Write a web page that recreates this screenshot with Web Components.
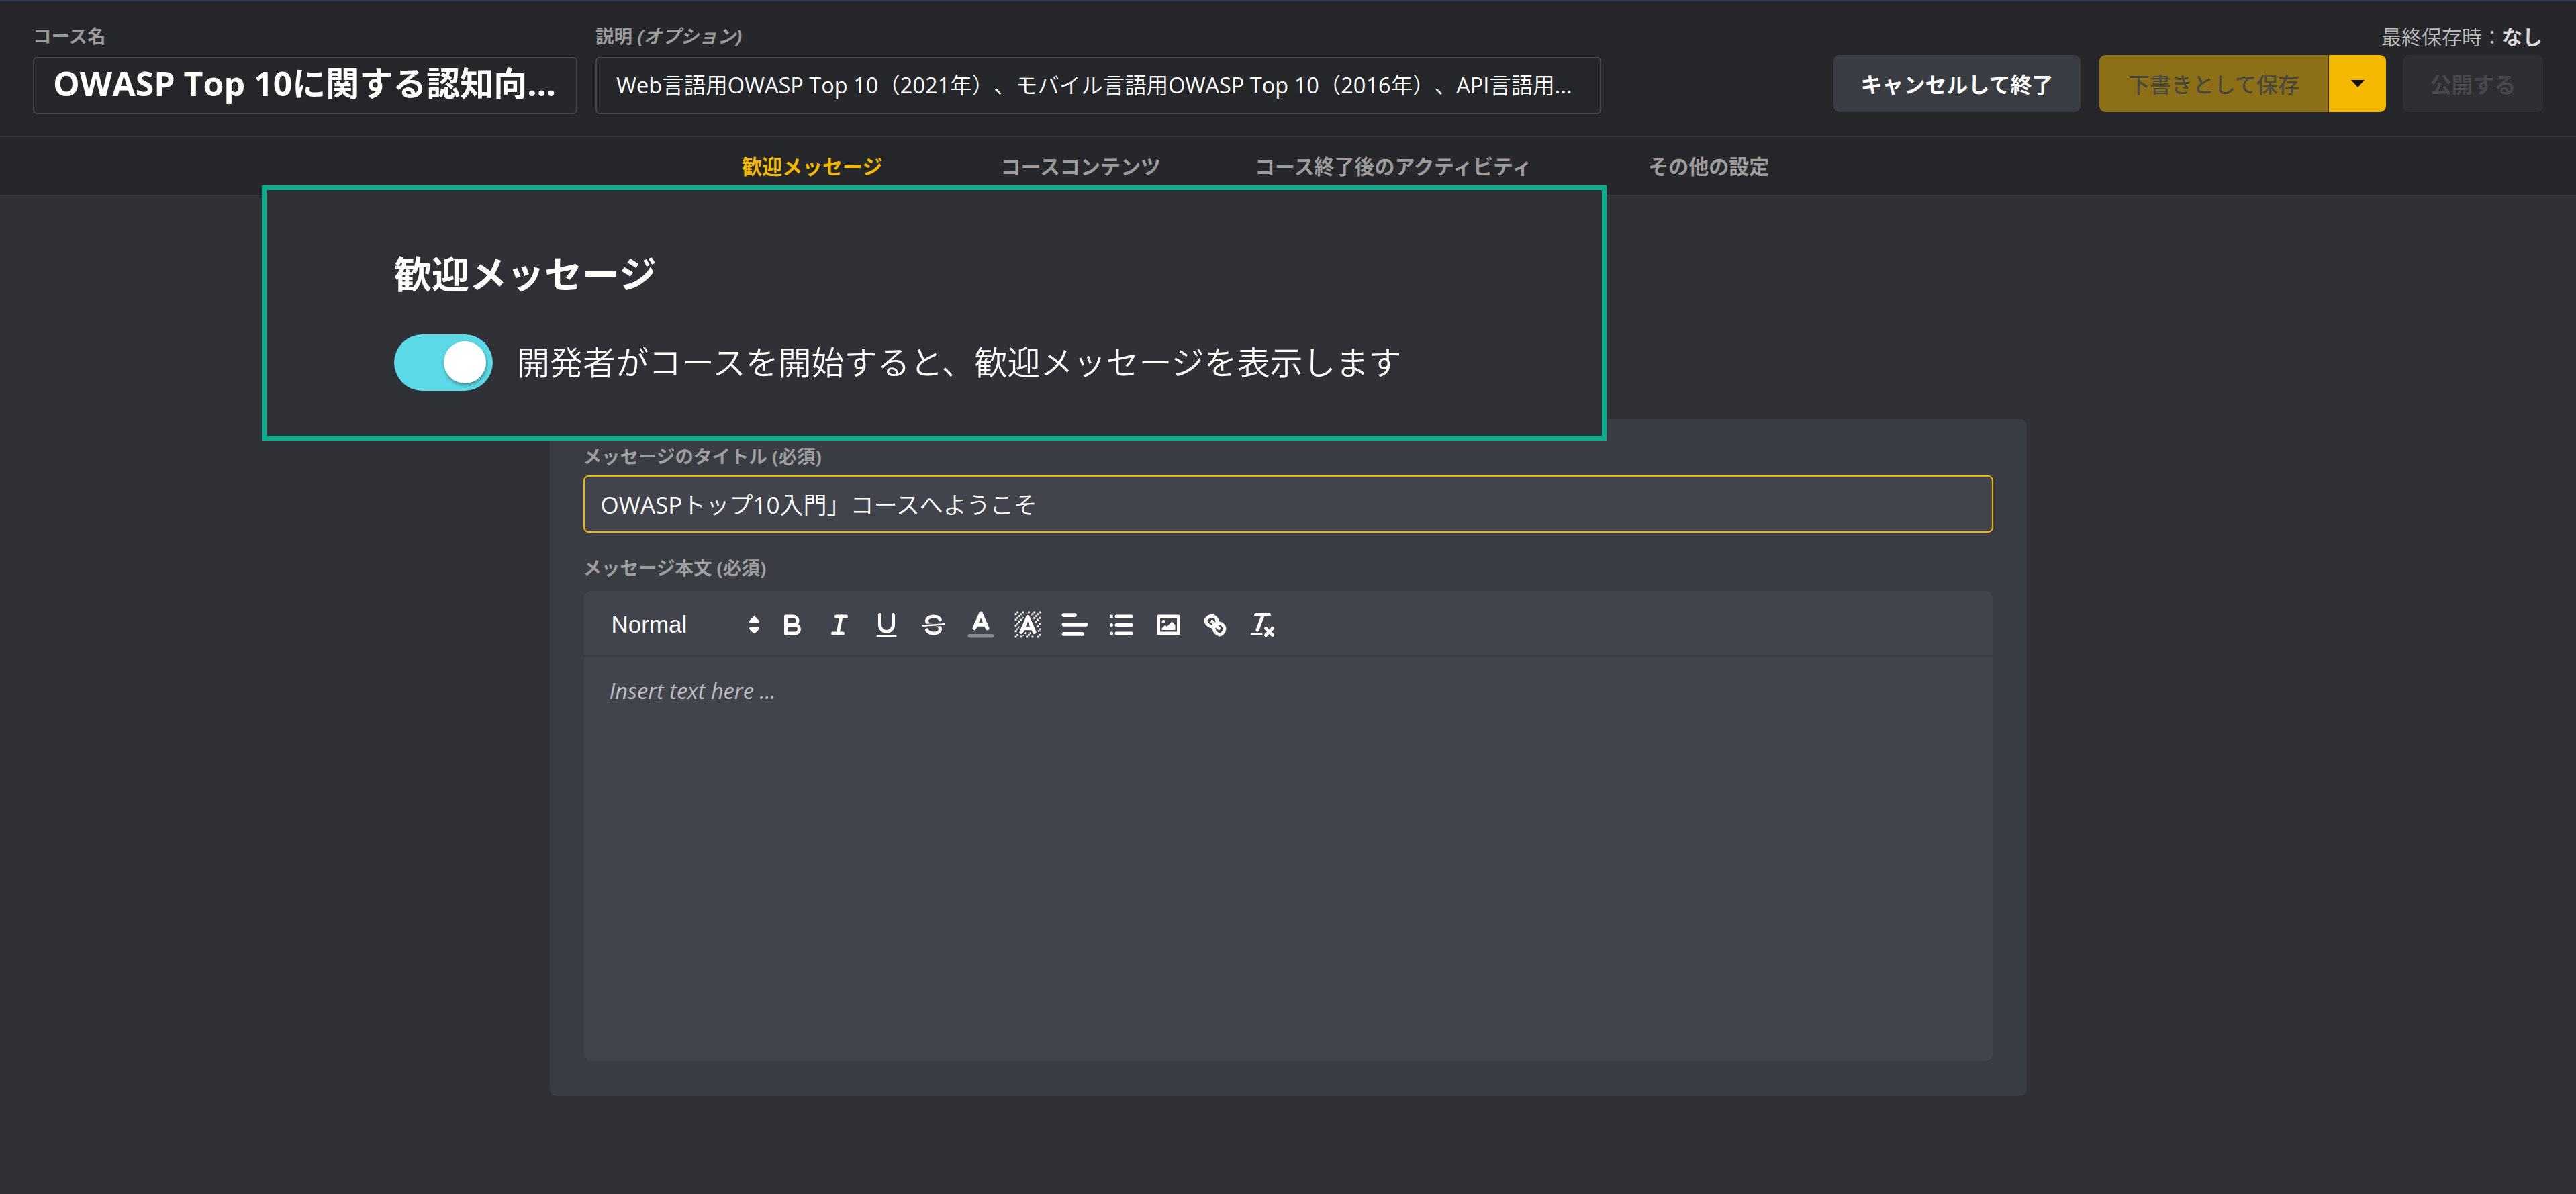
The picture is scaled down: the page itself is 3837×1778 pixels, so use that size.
<!DOCTYPE html>
<html lang="ja">
<head>
<meta charset="utf-8">
<title>Course editor</title>
<style>
html,body{margin:0;padding:0;background:#303136;}
body{font-family:"Open Sans","Noto Sans CJK JP",sans-serif;color:#fff;height:1778px;overflow:hidden;text-spacing-trim:space-all;}
</style>
</head>
<body>
<course-app></course-app>
<script>
const FONT='"Open Sans","Noto Sans CJK JP",sans-serif';
function def(name,css,html,init){
  customElements.define(name,class extends HTMLElement{
    constructor(){super();const r=this.attachShadow({mode:'open'});
      r.innerHTML='<style>'+css+'</style>'+(typeof html==='function'?html(this):html);}
    connectedCallback(){ if(init) init(this); }
  });
}
def('course-field',`
:host{display:block;font-family:${FONT};}
.l{display:block;height:40px;line-height:40px;font-size:27.5px;font-weight:700;color:#9b9b9b;margin-bottom:11px;}
.b{box-sizing:border-box;height:85px;border:2px solid #43464d;border-radius:6px;background:#26272b;display:flex;align-items:center;color:#fff;white-space:pre;overflow:hidden;}
:host([big]) .b{font-size:50px;font-weight:700;padding:0 0 12px 28px;}
:host(:not([big])) .b{font-size:32.5px;padding:0 0 5px 29px;}
`,`<span class="l"><slot name="label"></slot></span><div class="b"><slot></slot></div>`);

def('action-btn',`
:host{display:inline-flex;box-sizing:border-box;height:85px;align-items:center;justify-content:center;border-radius:9px;font-family:${FONT};font-size:32px;font-weight:700;white-space:nowrap;padding-bottom:2px;}
:host([kind=cancel]){width:368px;background:#3a3c44;color:#fff;}
:host([kind=publish]){width:209px;background:#2e2f34;color:#47484d;}
`,`<slot></slot>`);

def('split-btn',`
:host{display:inline-flex;height:85px;font-family:${FONT};font-size:32px;font-weight:500;}
.m{width:341px;background:#8c6f17;color:#4a4a3c;border-radius:9px 0 0 9px;display:flex;align-items:center;justify-content:center;box-sizing:border-box;padding:0 0 2px 0;white-space:nowrap;}
.a{width:86px;box-sizing:border-box;border-left:1px solid #2e2a18;background:#f5b800;border-radius:0 9px 9px 0;display:flex;align-items:center;justify-content:center;}
svg{width:20px;height:11px;display:block;}
`,`<div class="m"><slot></slot></div><div class="a"><svg viewBox="0 0 20 11"><polygon points="0,0 20,0 10,11" fill="#111"/></svg></div>`);

def('course-header',`
:host{display:flex;box-sizing:border-box;height:204px;border-top:2px solid #34375a;border-bottom:2px solid #36373d;background:#26272b;padding:32px 49px 0 49px;}
.f{display:flex;gap:27px;}
.j{font-weight:350}
.r{margin-left:auto;display:flex;flex-direction:column;align-items:flex-end;}
.s{height:40px;line-height:40px;font-size:30px;color:#bdbdbd;margin:1px 1px 7px 0;white-space:nowrap;}
.s b{color:#ddd;font-weight:700;}
.g{display:flex;}
.g .sp{margin-left:28px}.g .pb{margin-left:25px}
`,`<div class="f">
<course-field big style="width:811px"><span slot="label">コース名</span>OWASP Top 10に関する認知向...</course-field>
<course-field style="width:1498px"><span slot="label">説明 <i>(オプション)</i></span><span>Web<span class="j">言語用</span>OWASP Top 10<span class="j">（</span>2021<span class="j">年）、モバイル言語用</span>OWASP Top 10<span class="j">（</span>2016<span class="j">年）、</span>API<span class="j">言語用</span>...</span></course-field>
</div>
<div class="r"><div class="s"><span class="j">最終保存時：</span><b>なし</b></div>
<div class="g"><action-btn kind="cancel">キャンセルして終了</action-btn><split-btn class="sp">下書きとして保存</split-btn><action-btn kind="publish" class="pb">公開する</action-btn></div></div>`);

def('tab-nav',`
:host{display:flex;box-sizing:border-box;height:88px;background:#26272b;border-bottom:2px solid #36373d;padding:0 0 2px 1105px;align-items:center;font-size:30px;font-weight:700;color:#9c9c9c;white-space:nowrap;font-family:${FONT};}
span{display:block}
.a{color:#f5b800}
.t2{margin-left:176px}.t3{margin-left:140px}.t4{margin-left:173px}
`,`<span class="a">歓迎メッセージ</span><span class="t2">コースコンテンツ</span><span class="t3">コース終了後のアクティビティ</span><span class="t4">その他の設定</span>`);

def('toggle-switch',`
:host{display:block;position:relative;width:147px;height:84px;border-radius:42px;background:#5cd9e6;flex:none;}
i{position:absolute;top:10px;right:10px;width:63px;height:63px;border-radius:50%;background:#fff;box-shadow:1px 3px 5px rgba(0,0,0,.35);}
`,`<i></i>`);

def('welcome-callout',`
:host{display:block;position:absolute;left:390px;top:276px;box-sizing:border-box;width:2003px;height:380px;border:7px solid #0bad8f;background:#303136;padding:94px 0 0 190px;font-family:${FONT};color:#fff;}
h2{margin:0 0 61px 0;height:60px;line-height:60px;font-size:56px;font-weight:700;}
.r{display:flex;align-items:center;gap:36px;font-size:49px;line-height:84px;white-space:nowrap;color:#fff;font-weight:350;}
.r span{position:relative;top:-1px}
`,`<h2>歓迎メッセージ</h2><div class="r"><toggle-switch></toggle-switch><span>開発者がコースを開始すると、歓迎メッセージを表示します</span></div>`);

const ICONS={
bold:`<path class="s" d="M5,4H9.5A2.5,2.5,0,0,1,12,6.5v0A2.5,2.5,0,0,1,9.5,9H5A0,0,0,0,1,5,9V4A0,0,0,0,1,5,4Z"/><path class="s" d="M5,9h5.5A2.5,2.5,0,0,1,13,11.5v0A2.5,2.5,0,0,1,10.5,14H5a0,0,0,0,1,0,0V9A0,0,0,0,1,5,9Z"/>`,
italic:`<line class="s" x1="7" x2="13" y1="4" y2="4"/><line class="s" x1="5" x2="11" y1="14" y2="14"/><line class="s" x1="8" x2="10" y1="14" y2="4"/>`,
underline:`<path class="s" d="M5,3V9a4.012,4.012,0,0,0,4,4H9a4.012,4.012,0,0,0,4-4V3"/><rect class="f" height="1" rx="0.5" ry="0.5" width="12" x="3" y="15"/>`,
strike:`<line class="s" style="stroke-width:1" x1="15.5" x2="2.5" y1="8.5" y2="9.5"/><path class="f" d="M9.007,8C6.542,7.791,6,7.519,6,6.5,6,5.792,7.283,5,9,5c1.571,0,2.765.679,2.969,1.309a1,1,0,0,0,1.9-.617C13.356,4.106,11.354,3,9,3,6.2,3,4,4.538,4,6.5a3.2,3.2,0,0,0,.5,1.843Z"/><path class="f" d="M8.984,10C11.457,10.208,12,10.479,12,11.5c0,.708-1.283,1.5-3,1.5-1.571,0-2.765-.679-2.969-1.309a1,1,0,1,0-1.9.617C4.644,13.894,6.646,15,9,15c2.8,0,5-1.538,5-3.5a3.2,3.2,0,0,0-.5-1.843Z"/>`,
color:`<line class="s" style="stroke:#8b8c90" x1="3" x2="15" y1="15" y2="15"/><polyline class="s" points="5.5 11 9 3 12.5 11"/><line class="s" x1="11.63" x2="6.38" y1="9" y2="9"/>`,
background:`<g class="f"><polygon points="6 6.868 6 6 5 6 5 7 5.942 7 6 6.868"/><rect height="1" width="1" x="4" y="4"/><polygon points="6.817 5 6 5 6 6 6.38 6 6.817 5"/><rect height="1" width="1" x="2" y="6"/><rect height="1" width="1" x="3" y="5"/><rect height="1" width="1" x="4" y="7"/><polygon points="4 11.439 4 11 3 11 3 12 3.755 12 4 11.439"/><rect height="1" width="1" x="2" y="12"/><rect height="1" width="1" x="2" y="9"/><rect height="1" width="1" x="2" y="15"/><polygon points="4.63 10 4 10 4 11 4.192 11 4.63 10"/><rect height="1" width="1" x="3" y="8"/><path d="M10.832,4.2L11,4.582V4H10.708A1.948,1.948,0,0,1,10.832,4.2Z"/><path d="M7,4.582L7.168,4.2A1.929,1.929,0,0,1,7.292,4H7V4.582Z"/><path d="M8,13H7.683l-0.351.8a1.933,1.933,0,0,1-.124.2H8V13Z"/><rect height="1" width="1" x="12" y="2"/><rect height="1" width="1" x="11" y="3"/><path d="M9,3H8V3.282A1.985,1.985,0,0,1,9,3Z"/><rect height="1" width="1" x="2" y="3"/><rect height="1" width="1" x="6" y="2"/><rect height="1" width="1" x="3" y="2"/><rect height="1" width="1" x="5" y="3"/><rect height="1" width="1" x="9" y="2"/><rect height="1" width="1" x="15" y="14"/><polygon points="13.447 10.174 13.469 10.225 13.472 10.232 13.808 11 14 11 14 10 13.37 10 13.447 10.174"/><rect height="1" width="1" x="13" y="7"/><rect height="1" width="1" x="15" y="5"/><rect height="1" width="1" x="14" y="6"/><rect height="1" width="1" x="15" y="8"/><rect height="1" width="1" x="14" y="9"/><path d="M3.775,14H3v1H4V14.314A1.97,1.97,0,0,1,3.775,14Z"/><rect height="1" width="1" x="14" y="3"/><polygon points="12 6.868 12 6 11.62 6 12 6.868"/><rect height="1" width="1" x="15" y="2"/><rect height="1" width="1" x="12" y="5"/><rect height="1" width="1" x="13" y="4"/><polygon points="12.933 9 13 9 13 8 12.495 8 12.933 9"/><rect height="1" width="1" x="9" y="14"/><rect height="1" width="1" x="8" y="15"/><path d="M6,14.926V15H7V14.316A1.993,1.993,0,0,1,6,14.926Z"/><rect height="1" width="1" x="5" y="15"/><path d="M10.668,13.8L10.317,13H10v1h0.792A1.947,1.947,0,0,1,10.668,13.8Z"/><rect height="1" width="1" x="11" y="15"/><path d="M14.332,12.2a1.99,1.99,0,0,1,.166.8H15V12H14.245Z"/><rect height="1" width="1" x="14" y="15"/><rect height="1" width="1" x="15" y="11"/></g><polyline class="s" points="5.5 13 9 5 12.5 13"/><line class="s" x1="11.63" x2="6.38" y1="11" y2="11"/>`,
align:`<line class="s" x1="3" x2="15" y1="9" y2="9"/><line class="s" x1="3" x2="13" y1="14" y2="14"/><line class="s" x1="3" x2="9" y1="4" y2="4"/>`,
list:`<line class="s" x1="6" x2="15" y1="4" y2="4"/><line class="s" x1="6" x2="15" y1="9" y2="9"/><line class="s" x1="6" x2="15" y1="14" y2="14"/><line class="s" x1="3" x2="3" y1="4" y2="4"/><line class="s" x1="3" x2="3" y1="9" y2="9"/><line class="s" x1="3" x2="3" y1="14" y2="14"/>`,
image:`<rect class="s" height="10" width="12" x="3" y="4"/><circle class="f" cx="6" cy="7" r="1"/><polyline class="f" points="5 12 5 11 7 9 8 10 11 7 13 9 13 12 5 12"/>`,
link:`<line class="s" x1="7" x2="11" y1="7" y2="11"/><path class="s" d="M8.9,4.577a3.476,3.476,0,0,1,.36,4.679A3.476,3.476,0,0,1,4.577,8.9C3.185,7.5,2.5,6.4,4,5S7.5,3.185,8.9,4.577Z"/><path class="s" d="M13.423,9.1a3.476,3.476,0,0,0-4.679-.36,3.476,3.476,0,0,0,.36,4.679c1.392,1.392,2.5,2.073,4,.576S14.815,10.5,13.423,9.1Z"/>`,
clean:`<line class="s" x1="5" x2="13" y1="3" y2="3"/><line class="s" x1="6" x2="9.35" y1="12" y2="3"/><line class="s" x1="11" x2="15" y1="11" y2="15"/><line class="s" x1="15" x2="11" y1="11" y2="15"/><rect class="f" height="1" rx="0.5" ry="0.5" width="7" x="2" y="14"/>`,
updown:`<polygon class="s" points="7 11 9 13 11 11 7 11"/><polygon class="s" points="7 7 9 5 11 7 7 7"/>`
};
def('ql-icon',`
:host{display:flex;width:70px;height:60px;align-items:center;justify-content:center;flex:none;}
svg{width:45px;height:45px;display:block;overflow:visible;}
:host([wide]) svg{width:50px;height:50px;}
.s{fill:none;stroke:#fff;stroke-width:2;stroke-linecap:round;stroke-linejoin:round;}
.f{fill:#fff;stroke:none;}
`,h=>`<svg viewBox="0 0 18 18">${ICONS[h.getAttribute('name')]}</svg>`);

def('rich-editor',`
:host{display:block;box-sizing:border-box;height:700px;margin:0 1px;background:#42444d;border-radius:10px;overflow:hidden;}
.tb{box-sizing:border-box;height:98px;border-bottom:2px solid #3a3c44;display:flex;align-items:center;padding:4px 0 0 31px;}
.p{width:245px;height:60px;display:flex;align-items:center;justify-content:space-between;box-sizing:border-box;padding-left:10px;font-family:"Liberation Sans",sans-serif;font-size:35px;color:#fff;flex:none;}
.p svg{width:45px;height:45px;display:block;}
.p polygon{fill:none;stroke:#fff;stroke-width:2;stroke-linejoin:round;}
.body{padding:28px 38px;font-family:"Open Sans","Noto Sans CJK JP",sans-serif;font-style:italic;font-size:32.5px;line-height:46px;color:#bcbdc1;}
`,`<div class="tb"><div class="p"><span>Normal</span><svg viewBox="0 0 18 18">${ICONS.updown}</svg></div>
${['bold','italic','underline','strike','color','background','align','list','image','link','clean'].map(n=>`<ql-icon name="${n}"${['color','background','align'].includes(n)?' wide':''}></ql-icon>`).join('')}
</div><div class="body">Insert text here ...</div>`);

def('message-card',`
:host{display:block;box-sizing:border-box;width:2200px;height:1008px;margin:332px auto 0;background:#3a3c44;border-radius:10px;padding:36px 50px 0 50px;font-family:${FONT};}
.l{height:40px;line-height:40px;font-size:27.5px;font-weight:700;color:#9d9e9f;white-space:nowrap;}
.i{box-sizing:border-box;height:85px;margin-top:8px;border:2px solid #f5b800;border-radius:8px;background:#42444d;color:#fff;font-size:35px;display:flex;align-items:center;padding:0 0 2px 24px;white-space:pre;margin-bottom:33px;}
.j{font-weight:350}
rich-editor{margin-top:14px;}
`,`<div class="l">メッセージのタイトル (必須)</div><div class="i"><span>OWASP<span class="j">トップ</span>10<span class="j">入門」コースへようこそ</span></span></div><div class="l">メッセージ本文 (必須)</div><rich-editor></rich-editor>`);

def('course-app',`
:host{display:block;position:relative;height:1778px;background:#303136;color:#fff;font-family:${FONT};}
`,`<course-header></course-header><tab-nav></tab-nav><message-card></message-card><welcome-callout></welcome-callout>`);
</script>
</body>
</html>
